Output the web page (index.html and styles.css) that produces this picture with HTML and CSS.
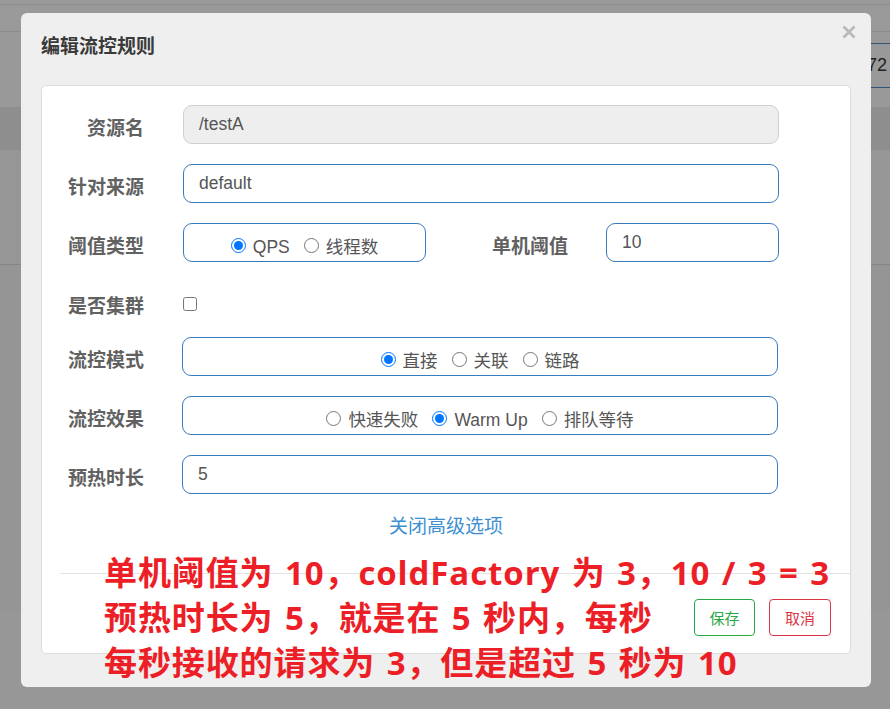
FILE: index.html
```html
<!DOCTYPE html>
<html lang="zh-CN">
<head>
<meta charset="utf-8">
<title>编辑流控规则</title>
<link rel="stylesheet" href="styles.css">
</head>
<body>
<div class="page">
  <div class="pg-top"></div>
  <div class="pg-nav"></div>
  <div class="pg-toolbar">
    <div class="pg-search">572</div>
  </div>
  <div class="pg-thead"></div>
  <div class="pg-row"></div>
  <div class="pg-body"></div>
  <div class="pg-foot"></div>
</div>

<div class="modal">
  <div class="modal-header">
    <h4 class="modal-title">编辑流控规则</h4>
    <span class="close">
      <svg width="14" height="14" viewBox="0 0 14 14"><path d="M1.5 1.5 L12.5 12.5 M12.5 1.5 L1.5 12.5" stroke="#b9b9b9" stroke-width="2.8" stroke-linecap="butt"/></svg>
    </span>
  </div>
  <div class="panel">
    <div class="form-row">
      <label class="lbl">资源名</label>
      <div class="ctl ctl-disabled">/testA</div>
    </div>
    <div class="form-row">
      <label class="lbl">针对来源</label>
      <div class="ctl">default</div>
    </div>
    <div class="form-row">
      <label class="lbl">阈值类型</label>
      <div class="ctl radio-box ctl-short">
        <label class="radio"><input type="radio" name="grade" checked><span>QPS</span></label>
        <label class="radio"><input type="radio" name="grade"><span>线程数</span></label>
      </div>
      <label class="lbl lbl-count">单机阈值</label>
      <div class="ctl ctl-count">10</div>
    </div>
    <div class="form-row row-check">
      <label class="lbl">是否集群</label>
      <input class="check" type="checkbox">
    </div>
    <div class="form-row">
      <label class="lbl">流控模式</label>
      <div class="ctl radio-box ctl-wide">
        <label class="radio"><input type="radio" name="mode" checked><span>直接</span></label>
        <label class="radio"><input type="radio" name="mode"><span>关联</span></label>
        <label class="radio"><input type="radio" name="mode"><span>链路</span></label>
      </div>
    </div>
    <div class="form-row">
      <label class="lbl">流控效果</label>
      <div class="ctl radio-box ctl-wide">
        <label class="radio"><input type="radio" name="effect"><span>快速失败</span></label>
        <label class="radio"><input type="radio" name="effect" checked><span>Warm Up</span></label>
        <label class="radio"><input type="radio" name="effect"><span>排队等待</span></label>
      </div>
    </div>
    <div class="form-row row-last">
      <label class="lbl">预热时长</label>
      <div class="ctl ctl-wide">5</div>
    </div>
    <div class="adv-link"><a>关闭高级选项</a></div>
    <div class="modal-footer">
      <button class="btn btn-save">保存</button>
      <button class="btn btn-cancel">取消</button>
    </div>
  </div>
</div>

<div class="note">
  <p>单机阈值为 10，coldFactory 为 3，10 / 3 = 3</p>
  <p>预热时长为 5，就是在 5 秒内，每秒</p>
  <p>每秒接收的请求为 3，但是超过 5 秒为 10</p>
</div>
</body>
</html>
```

FILE: styles.css
```css
* { box-sizing: border-box; }

html, body {
  margin: 0;
  padding: 0;
}

body {
  width: 890px;
  height: 709px;
  overflow: hidden;
  background: #979797;
  font-family: "Liberation Sans", "Noto Sans CJK SC", sans-serif;
  position: relative;
}

/* dimmed page behind the dialog */
.page {
  display: flex;
  flex-direction: column;
}
.pg-top {
  height: 5px;
  background: #9a9a9a;
  border-bottom: 1px solid #8b8b8b;
}
.pg-nav {
  height: 27px;
  background: #9a9a9a;
  border-bottom: 1px solid #8c8c8c;
}
.pg-toolbar {
  height: 75px;
  background: #999999;
  padding-top: 11px;
  display: flex;
}
.pg-search {
  margin-left: 851px;
  width: 60px;
  height: 45px;
  border-top: 1px solid #2f5478;
  border-bottom: 1px solid #2f5478;
  font-family: "Liberation Sans", sans-serif;
  font-size: 18px;
  line-height: 43px;
  color: #222;
  padding-left: 6px;
}
.pg-thead {
  height: 43px;
  background: #8e8e8e;
}
.pg-row {
  height: 115px;
  background: #969696;
  border-bottom: 1px solid #858585;
}
.pg-body {
  height: 346px;
  background: #959595;
}
.pg-foot {
  flex: 1;
  height: 97px;
  background: #989898;
}

/* dialog */
.modal {
  position: absolute;
  left: 21px;
  top: 13px;
  width: 850px;
  height: 674px;
  background: #efefef;
  border-radius: 6px;
}
.modal-header {
  padding: 20px 20px 28px;
}
.modal-title {
  margin: 0;
  font-family: "Noto Sans CJK SC", sans-serif;
  font-weight: 700;
  font-size: 19px;
  line-height: 24px;
  color: #3a3a3a;
}
.close {
  position: absolute;
  right: 15px;
  top: 12px;
  width: 14px;
  height: 14px;
  display: block;
}
.close svg { display: block; }

.panel {
  margin: 0 20px;
  background: #ffffff;
  border: 1px solid #dcdcdc;
  border-radius: 5px;
  padding: 19px 0 17px;
}

.form-row {
  display: flex;
  align-items: center;
  height: 39px;
  margin-bottom: 20px;
}
.row-check {
  height: 41px;
  margin-bottom: 14px;
}
.row-last {
  margin-bottom: 18px;
}

.lbl {
  width: 102px;
  flex: none;
  text-align: right;
  font-family: "Noto Sans CJK SC", sans-serif;
  font-weight: 700;
  font-size: 19px;
  padding-top: 5px;
  line-height: 34px;
  color: #616161;
}
.lbl-count {
  width: 142px;
}

.ctl {
  flex: none;
  margin-left: 39px;
  width: 596px;
  height: 39px;
  border: 1px solid #3a7bbd;
  border-radius: 9px;
  background: #fff;
  padding: 0 15px;
  font-size: 17.5px;
  line-height: 37px;
  color: #555;
}
.ctl-disabled {
  background: #eeeeee;
  border-color: #cfcfcf;
}
.ctl-short {
  width: 243px;
}
.ctl-count {
  width: 173px;
  margin-left: 38px;
}
.ctl-wide {
  margin-left: 38px;
}

.radio-box {
  display: flex;
  justify-content: center;
  align-items: center;
  gap: 14px;
  padding-top: 8px;
}
.radio {
  display: flex;
  align-items: center;
  gap: 7px;
  font-family: "Liberation Sans", "Noto Sans CJK SC", sans-serif;
  font-size: 17.5px;
  color: #555;
  line-height: 24px;
}
.radio input {
  margin: 0;
  width: 15px;
  height: 15px;
  position: relative;
  top: -1px;
}

.check {
  margin: 0 0 0 39px;
  width: 14px;
  height: 14px;
  position: relative;
  top: 1px;
}

.adv-link {
  text-align: center;
  line-height: 26px;
  height: 26px;
  font-family: "Noto Sans CJK SC", sans-serif;
  font-size: 19px;
}
.adv-link a {
  color: #3d8fd1;
  cursor: pointer;
}

.modal-footer {
  margin-top: 35px;
  margin-left: 18px;
  border-top: 1px solid #e3e3e3;
  padding: 25px 19px 0 0;
  display: flex;
  justify-content: flex-end;
  gap: 14px;
}
.btn {
  width: 61px;
  height: 37px;
  background: #fff;
  border: 1px solid;
  border-radius: 4px;
  font-family: "Noto Sans CJK SC", sans-serif;
  font-size: 15px;
  padding: 0;
  line-height: 35px;
}
.btn-save {
  border-color: #28a745;
  color: #28a745;
}
.btn-cancel {
  width: 62px;
  border-color: #dc3545;
  color: #dc3545;
}

/* red annotation drawn over the dialog */
.note {
  position: absolute;
  left: 104px;
  top: 550px;
  font-family: "Open Sans", "Noto Sans CJK SC", sans-serif;
  font-weight: 700;
  font-size: 33px;
  line-height: 45px;
  letter-spacing: 0.9px;
  word-spacing: 2px;
  color: #ec1f27;
  white-space: nowrap;
}
.note p {
  margin: 0;
}
```
